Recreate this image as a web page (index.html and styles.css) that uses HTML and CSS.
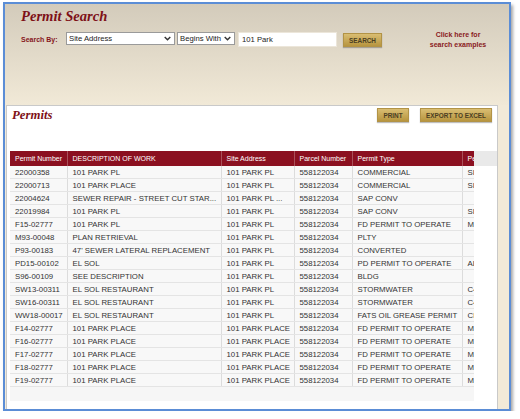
FILE: index.html
```html
<!DOCTYPE html>
<html lang="en">
<head>
  <meta charset="UTF-8">
  <title>Permit Search</title>
  <link rel="stylesheet" href="styles.css">
</head>
<body>
  <div class="window">
    <!-- Search header -->
    <div class="search-head">
      <h1 class="title">Permit Search</h1>
      <div class="search-row">
        <span class="label">Search By:</span>
        <div class="select select-field">
          <span>Site Address</span>
          <svg class="chev" viewBox="0 0 8 5"><polyline points="0.8,0.8 4,4 7.2,0.8"/></svg>
        </div>
        <div class="select select-op">
          <span>Begins With</span>
          <svg class="chev" viewBox="0 0 8 5"><polyline points="0.8,0.8 4,4 7.2,0.8"/></svg>
        </div>
        <input class="search-input" type="text" value="101 Park">
        <button class="gold-btn search-btn">SEARCH</button>
        <a class="examples" href="#">Click here for<br>search examples</a>
      </div>
    </div>

    <!-- Results panel -->
    <div class="panel">
      <div class="toolbar">
        <h2 class="panel-title">Permits</h2>
        <div class="actions">
          <button class="gold-btn print-btn">PRINT</button>
          <button class="gold-btn excel-btn">EXPORT TO EXCEL</button>
        </div>
      </div>

      <div class="grid">
        <div class="grid-body">
          <table class="permits">
            <colgroup>
              <col style="width:57px"><col style="width:154px"><col style="width:73px">
              <col style="width:58px"><col style="width:110px"><col style="width:80px">
            </colgroup>
            <thead>
              <tr><th>Permit Number</th><th>DESCRIPTION OF WORK</th><th>Site Address</th><th>Parcel Number</th><th>Permit Type</th><th>Permit Subtype</th></tr>
            </thead>
            <tbody>
              <tr><td>22000358</td><td>101 PARK PL</td><td>101 PARK PL</td><td>558122034</td><td>COMMERCIAL</td><td>SINGLE</td></tr>
              <tr><td>22000713</td><td>101 PARK PLACE</td><td>101 PARK PL</td><td>558122034</td><td>COMMERCIAL</td><td>SINGLE</td></tr>
              <tr><td>22004624</td><td>SEWER REPAIR - STREET CUT STAR...</td><td>101 PARK PL ...</td><td>558122034</td><td>SAP CONV</td><td></td></tr>
              <tr><td>22019984</td><td>101 PARK PL</td><td>101 PARK PL</td><td>558122034</td><td>SAP CONV</td><td>SINGLE</td></tr>
              <tr><td>F15-02777</td><td>101 PARK PL</td><td>101 PARK PL</td><td>558122034</td><td>FD PERMIT TO OPERATE</td><td>MERCANTILE</td></tr>
              <tr><td>M93-00048</td><td>PLAN RETRIEVAL</td><td>101 PARK PL</td><td>558122034</td><td>PLTY</td><td></td></tr>
              <tr><td>P93-00183</td><td>47' SEWER LATERAL REPLACEMENT</td><td>101 PARK PL</td><td>558122034</td><td>CONVERTED</td><td></td></tr>
              <tr><td>PD15-00102</td><td>EL SOL</td><td>101 PARK PL</td><td>558122034</td><td>PD PERMIT TO OPERATE</td><td>ALCOHOL</td></tr>
              <tr><td>S96-00109</td><td>SEE DESCRIPTION</td><td>101 PARK PL</td><td>558122034</td><td>BLDG</td><td></td></tr>
              <tr><td>SW13-00311</td><td>EL SOL RESTAURANT</td><td>101 PARK PL</td><td>558122034</td><td>STORMWATER</td><td>C4</td></tr>
              <tr><td>SW16-00311</td><td>EL SOL RESTAURANT</td><td>101 PARK PL</td><td>558122034</td><td>STORMWATER</td><td>C4</td></tr>
              <tr><td>WW18-00017</td><td>EL SOL RESTAURANT</td><td>101 PARK PL</td><td>558122034</td><td>FATS OIL GREASE PERMIT</td><td>CLASS</td></tr>
              <tr><td>F14-02777</td><td>101 PARK PLACE</td><td>101 PARK PLACE</td><td>558122034</td><td>FD PERMIT TO OPERATE</td><td>MERCANTILE</td></tr>
              <tr><td>F16-02777</td><td>101 PARK PLACE</td><td>101 PARK PLACE</td><td>558122034</td><td>FD PERMIT TO OPERATE</td><td>MERCANTILE</td></tr>
              <tr><td>F17-02777</td><td>101 PARK PLACE</td><td>101 PARK PLACE</td><td>558122034</td><td>FD PERMIT TO OPERATE</td><td>MERCANTILE</td></tr>
              <tr><td>F18-02777</td><td>101 PARK PLACE</td><td>101 PARK PLACE</td><td>558122034</td><td>FD PERMIT TO OPERATE</td><td>MERCANTILE</td></tr>
              <tr><td>F19-02777</td><td>101 PARK PLACE</td><td>101 PARK PLACE</td><td>558122034</td><td>FD PERMIT TO OPERATE</td><td>MERCANTILE</td></tr>
            </tbody>
          </table>
        </div>
      </div>
    </div>
  </div>
</body>
</html>
```

FILE: styles.css
```css
/* General */
body {
  margin: 0;
  padding: 0;
  background: #fff;
  font-family: "Liberation Sans", Arial, sans-serif;
  color: #333;
}

.window {
  box-sizing: border-box;
  width: 508px;
  height: 409px;
  margin: 2px 0 0 3px;
  border: 2px solid #5b8dd6;
  background: #f2ead8;
  box-shadow: 2px 3px 3px rgba(0, 0, 0, 0.35);
  display: flex;
  flex-direction: column;
  overflow: hidden;
}

/* Search header */
.search-head {
  height: 101px;
  flex: none;
  padding: 5px 0 0 16px;
  box-sizing: border-box;
  background: linear-gradient(180deg, #d3cbbb, #f1e9d7);
}

.title {
  margin: 0;
  font-family: "Liberation Serif", "Times New Roman", serif;
  font-style: italic;
  font-weight: bold;
  font-size: 14.6px;
  line-height: 15px;
  color: #7e1117;
}

.search-row {
  display: flex;
  align-items: flex-start;
  margin-top: 8px;
}

.label {
  font-size: 7px;
  font-weight: bold;
  color: #86161c;
  margin-top: 4px;
  width: 45px;
}

.select {
  box-sizing: border-box;
  height: 13px;
  display: flex;
  align-items: center;
  justify-content: space-between;
  padding: 0 3px 0 2px;
  border: 1px solid #9a9a9a;
  background: #fff;
  font-size: 7.7px;
  color: #222;
}

.select-field {
  width: 109px;
}

.select-op {
  width: 58px;
  margin-left: 2px;
}

.chev {
  width: 7px;
  height: 5px;
  fill: none;
  stroke: #333;
  stroke-width: 1.6;
}

.search-input {
  box-sizing: border-box;
  width: 99px;
  height: 15px;
  margin-left: 3px;
  padding: 0 3px;
  border: 1px solid #ece6da;
  background: #fff;
  font-family: "Liberation Sans", Arial, sans-serif;
  font-size: 7.7px;
  color: #222;
  outline: none;
}

/* Gold buttons */
.gold-btn {
  box-sizing: border-box;
  height: 14px;
  padding: 0;
  border: 1px solid #b29346;
  background: linear-gradient(180deg, #d9bd72, #b7953f);
  box-shadow: 0 1px 1px rgba(0, 0, 0, 0.25);
  font-family: "Liberation Sans", Arial, sans-serif;
  font-size: 6.4px;
  font-weight: bold;
  color: #4b3e22;
  cursor: pointer;
}

.search-btn {
  width: 39px;
  margin: 1px 0 0 6px;
}

.examples {
  width: 62px;
  margin: -2px 20px 0 auto;
  text-align: center;
  font-size: 7px;
  line-height: 10px;
  font-weight: bold;
  color: #8a1a22;
  text-decoration: none;
}

/* Results panel */
.panel {
  flex: 1;
  margin: 0 11px 0 1px;
  border: 1px solid #c9c9c9;
  border-bottom: none;
  background: #fff;
  padding-top: 2px;
}

.toolbar {
  display: flex;
  justify-content: space-between;
  align-items: flex-start;
  padding: 0 5px;
}

.panel-title {
  margin: 0;
  font-family: "Liberation Serif", "Times New Roman", serif;
  font-style: italic;
  font-weight: bold;
  font-size: 12.8px;
  line-height: 14px;
  color: #7e1117;
}

.actions {
  display: flex;
  gap: 11px;
}

.print-btn {
  width: 32px;
}

.excel-btn {
  width: 72px;
}

/* Grid */
.grid {
  margin: 29px 0 0 3px;
  background: linear-gradient(180deg, #e9e9e9 0, #e9e9e9 15px, transparent 15px);
}

.grid-body {
  width: 464px;
  height: 250px;
  overflow: hidden;
  background: #f6f6f6;
}

.permits {
  border-collapse: collapse;
  table-layout: fixed;
  width: 532px;
}

.permits th {
  height: 15px;
  padding: 0 0 0 5px;
  background: #8b1020;
  border-right: 1px solid #a9505a;
  font-size: 7px;
  font-weight: normal;
  color: #fff;
  text-align: left;
  white-space: nowrap;
  overflow: hidden;
}

.permits td {
  height: 12px;
  padding: 0 0 0 5px;
  background: #f8f8f8;
  border-right: 1px solid #dcdcdc;
  border-bottom: 1px solid #e4e4e4;
  font-size: 7.8px;
  color: #333;
  white-space: nowrap;
  overflow: hidden;
}
```
